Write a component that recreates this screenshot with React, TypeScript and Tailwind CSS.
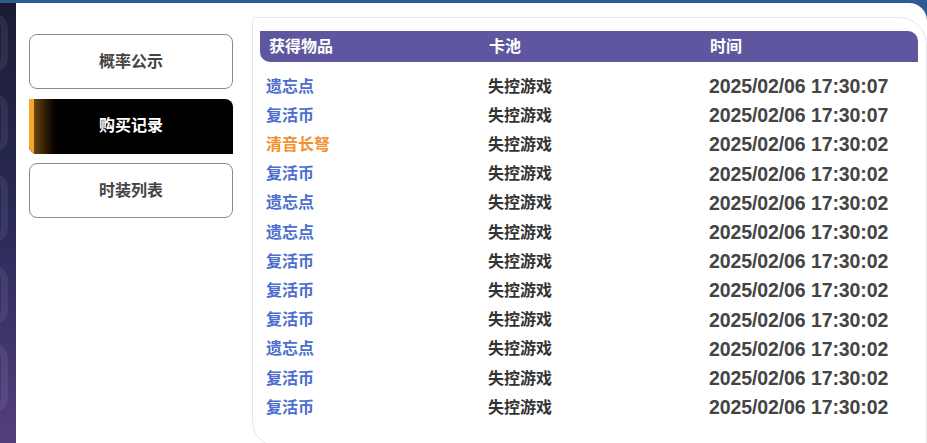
const tabs = ["概率公示", "购买记录", "时装列表"];

type Row = { item: string; rare?: boolean; pool: string; time: string };

const rows: Row[] = [
  { item: "遗忘点", pool: "失控游戏", time: "2025/02/06 17:30:07" },
  { item: "复活币", pool: "失控游戏", time: "2025/02/06 17:30:07" },
  { item: "清音长弩", rare: true, pool: "失控游戏", time: "2025/02/06 17:30:02" },
  { item: "复活币", pool: "失控游戏", time: "2025/02/06 17:30:02" },
  { item: "遗忘点", pool: "失控游戏", time: "2025/02/06 17:30:02" },
  { item: "遗忘点", pool: "失控游戏", time: "2025/02/06 17:30:02" },
  { item: "复活币", pool: "失控游戏", time: "2025/02/06 17:30:02" },
  { item: "复活币", pool: "失控游戏", time: "2025/02/06 17:30:02" },
  { item: "复活币", pool: "失控游戏", time: "2025/02/06 17:30:02" },
  { item: "遗忘点", pool: "失控游戏", time: "2025/02/06 17:30:02" },
  { item: "复活币", pool: "失控游戏", time: "2025/02/06 17:30:02" },
  { item: "复活币", pool: "失控游戏", time: "2025/02/06 17:30:02" },
];

const font = "font-['Liberation_Sans','Noto_Sans_CJK_SC',sans-serif]";

function SideTab({ label, active }: { label: string; active?: boolean }) {
  if (active) {
    return (
      <div className="relative flex h-[55px] items-center justify-center overflow-hidden rounded-tr-[8px] rounded-bl-[8px] bg-black">
        <div className="absolute inset-y-0 left-0 w-[5px] bg-[#f6a62a]" />
        <div className="absolute inset-y-0 left-[5px] w-[28px] bg-gradient-to-r from-[#6a4512] to-black" />
        <span className="relative text-[16px] font-bold text-white">{label}</span>
      </div>
    );
  }
  return (
    <div className="flex h-[55px] items-center justify-center rounded-[8px] border border-[#8a8a8a] bg-white">
      <span className="text-[16px] font-bold text-[#444]">{label}</span>
    </div>
  );
}

export default function App() {
  return (
    <div className={`flex h-[443px] w-[927px] flex-col overflow-hidden bg-[#2f5b92] ${font}`}>
      <div className="flex min-h-0 flex-1 pt-[3px]">
        {/* backdrop strip with faint rings */}
        <div className="relative w-[16px] shrink-0 overflow-hidden bg-gradient-to-b from-[#1b1c33] via-[#2a2a58] to-[#543f7e]">
          <div className="absolute left-[-22px] top-[10px] h-[60px] w-[30px] rounded-full border-[7px] border-white/[0.07]" />
          <div className="absolute left-[-22px] top-[90px] h-[60px] w-[30px] rounded-full border-[7px] border-white/[0.07]" />
          <div className="absolute left-[-22px] top-[170px] h-[70px] w-[30px] rounded-full border-[7px] border-white/[0.07]" />
          <div className="absolute left-[-22px] top-[262px] h-[60px] w-[30px] rounded-full border-[7px] border-white/[0.07]" />
          <div className="absolute left-[-22px] top-[340px] h-[70px] w-[30px] rounded-full border-[7px] border-white/[0.07]" />
        </div>

        <div className="flex min-w-0 flex-1 overflow-hidden rounded-tr-[18px] bg-white pl-[13px]">
          <nav className="flex w-[204px] shrink-0 flex-col gap-[9.5px] pt-[31px]">
            {tabs.map((t, i) => (
              <SideTab key={t} label={t} active={i === 1} />
            ))}
          </nav>

          <div className="ml-[19px] mt-[14px] flex h-[430px] min-w-0 flex-1 shrink-0 flex-col self-start rounded-tl-[4px] rounded-tr-[28px] rounded-bl-[26px] border border-[#e6e6e6] pl-[7px] pr-[8px] pt-[13px]">
            <div className="grid h-[31px] grid-cols-[220px_221px_1fr] items-center rounded-tr-[10px] rounded-bl-[10px] bg-[#5e579f] pl-[9px] text-[16px] font-bold text-white">
              <span>获得物品</span>
              <span>卡池</span>
              <span>时间</span>
            </div>
            <div className="mt-[10px] flex flex-col pl-[6px]">
              {rows.map((r, i) => (
                <div key={i} className="grid h-[29.2px] grid-cols-[222px_221px_1fr] items-center">
                  <span className={`text-[16px] font-bold ${r.rare ? "text-[#f2912f]" : "text-[#4b6ecf]"}`}>
                    {r.item}
                  </span>
                  <span className="text-[16px] font-bold text-[#333]">{r.pool}</span>
                  <span className="whitespace-nowrap text-[19.5px] font-bold tracking-[-0.1px] text-[#444]">{r.time}</span>
                </div>
              ))}
            </div>
          </div>
        </div>
      </div>
    </div>
  );
}
